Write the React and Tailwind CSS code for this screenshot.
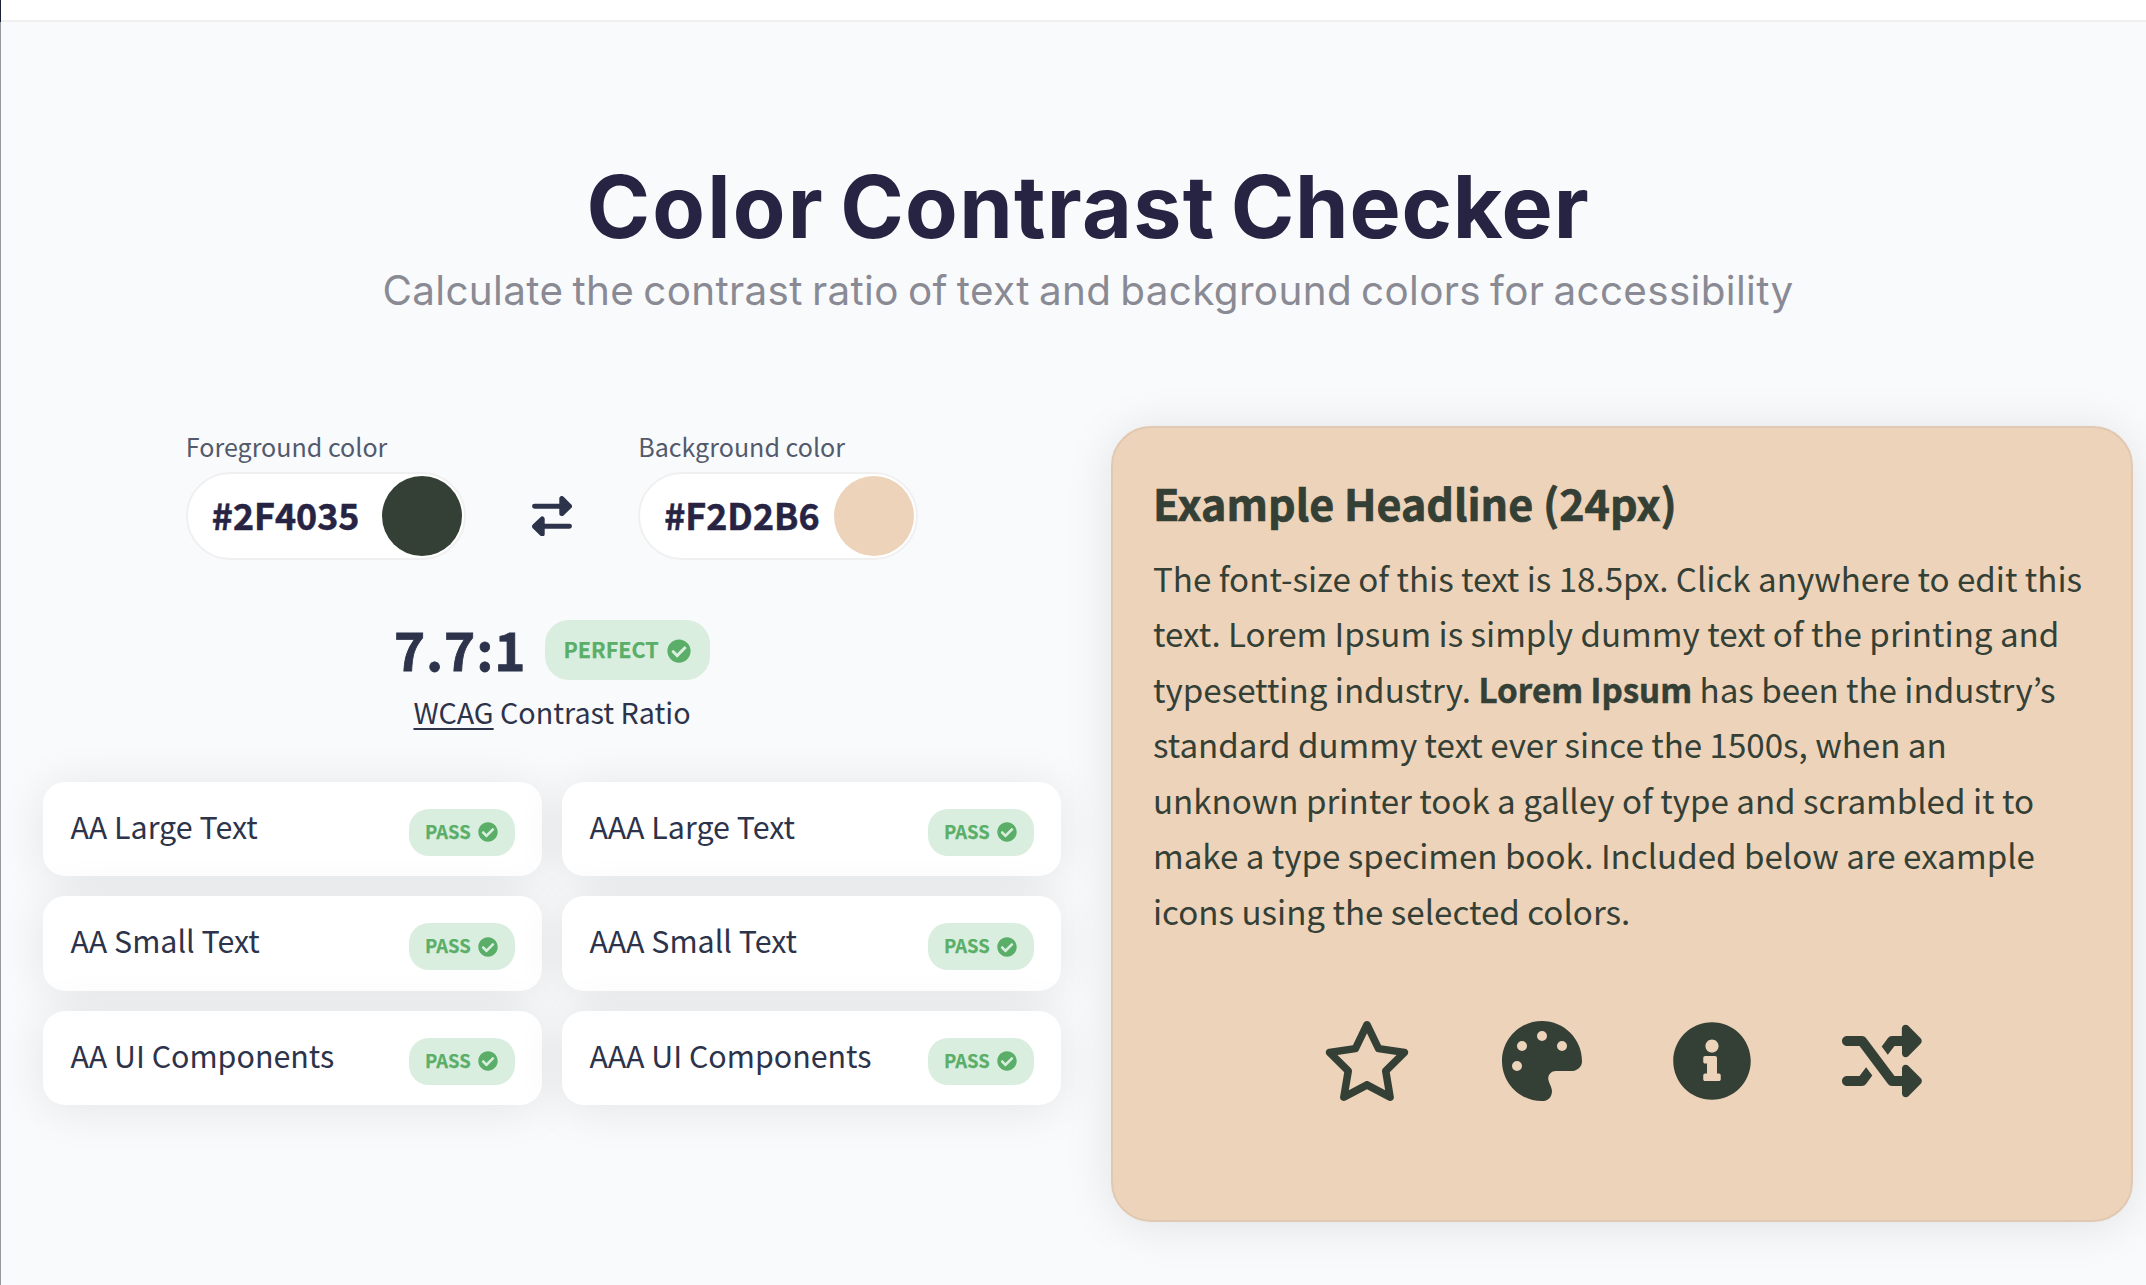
import React from "react";
import { FaCheckCircle, FaInfoCircle } from "react-icons/fa";
import { FaRegStar, FaPalette } from "react-icons/fa6";

const CARDS = [
  "AA Large Text",
  "AAA Large Text",
  "AA Small Text",
  "AAA Small Text",
  "AA UI Components",
  "AAA UI Components",
];

function SwapIcon() {
  return (
    <svg viewBox="0 0 40 40.6" className="h-[40.6px] w-10" fill="currentColor" stroke="currentColor" strokeLinecap="round" strokeLinejoin="round">
      <path d="M2.5 10.2H30M37.5 30.2H10" strokeWidth="4.9" fill="none" />
      <path d="M29.8 2.6V17.6L37.5 10.2ZM10.2 23V38L2.5 30.4Z" strokeWidth="5" />
    </svg>
  );
}

function ShuffleIcon() {
  return (
    <svg viewBox="0 0 512 512" className="size-20" fill="currentColor">
      <path d="M424.1 287c-15.13-15.12-40.1-4.426-40.1 16.97V352H336L153.6 108.8C147.6 100.8 138.1 96 128 96H32C14.31 96 0 110.3 0 128s14.31 32 32 32h80l182.4 243.2C300.4 411.3 309.9 416 320 416h63.97v47.94c0 21.39 25.86 32.12 40.99 17l79.1-79.98c9.387-9.387 9.387-24.59 0-33.97L424.1 287zM336 160h47.97v48.03c0 21.39 25.87 32.09 40.1 16.97l79.1-79.98c9.387-9.391 9.385-24.59-.0013-33.97l-79.1-79.98c-15.13-15.12-40.99-4.391-40.99 17V96H320c-10.06 0-19.56 4.75-25.59 12.81L254 162.7L293.1 216L336 160zM112 352H32c-17.69 0-32 14.31-32 32s14.31 32 32 32h96c10.06 0 19.56-4.75 25.59-12.81l40.4-53.87L154 296L112 352z" />
    </svg>
  );
}

function ColorField({ label, value, swatch }) {
  return (
    <div className="w-[280px]">
      <div className="text-[25.07px] leading-[40px] text-[#525a6c]">{label}</div>
      <div className="mt-1.5 flex h-[88px] items-center justify-between rounded-full border-2 border-[#f0f0f0] bg-white pr-0.5 pl-[24px]">
        <span className="pb-1 text-[35.8px] leading-[50px] font-bold text-[#272343] [-webkit-text-stroke:0.5px_currentColor]">{value}</span>
        <span className={`size-20 rounded-full ${swatch}`} />
      </div>
    </div>
  );
}

function PassCard({ title }) {
  return (
    <div className="flex h-[94.4px] items-center justify-between rounded-[22px] bg-white pr-[27px] pl-[27.5px] shadow-[0_4px_48px_rgba(0,0,0,0.09)]">
      <span className="pb-[6.4px] text-[30.4px] leading-[44px]">{title}</span>
      <span className="mt-[6.4px] flex h-[47px] w-[106px] items-center rounded-[20px] bg-[#d9eedf] pl-4 text-[#5aae68]">
        <span className="w-[53px] pb-[3px] text-[18.4px] leading-[28px] font-bold [-webkit-text-stroke:0.25px_currentColor]">PASS</span>
        <FaCheckCircle className="size-5" />
      </span>
    </div>
  );
}

export default function App() {
  return (
    <div className="flex h-[1285px] w-full overflow-hidden bg-[#f9fafc] font-['Noto_Sans_CJK_KR',sans-serif] text-[#2d334a]">
      <div className="flex w-px shrink-0 flex-col">
        <div className="h-[22px] bg-[#1b2236]" />
        <div className="flex-1 bg-[#97989b]" />
      </div>
      <div className="flex-1">
        <header className="h-[22px] border-b-2 border-[#f0f0f0] bg-white" />
        <main className="pt-[135px] pr-[13px] pl-[42px]">
          <h1 className="text-center font-['Inter',sans-serif] text-[86px] leading-[100px] font-bold tracking-[1.35px] text-[#272343] [word-spacing:-6.5px]">
            <span className="tracking-[2.2px]">Color</span> <span className="tracking-[1.3px]">Contrast</span>{" "}
            <span className="tracking-[0.8px]">Checker</span>
          </h1>
          <p className="mt-1.5 text-center font-['Inter',sans-serif] text-[40.4px] leading-[56px] tracking-[0.35px] text-[#8a8a94] [word-spacing:-2.6px]">
            Calculate the contrast ratio of text and background colors for accessibility
          </p>

          <div className="mt-[107px] flex items-start justify-between">
            <section className="w-[1018px]">
              <div className="flex items-end justify-center gap-[66.2px]">
                <ColorField label="Foreground color" value="#2F4035" swatch="bg-[#344035]" />
                <div className="flex h-[88px] items-center">
                  <SwapIcon />
                </div>
                <ColorField label="Background color" value="#F2D2B6" swatch="bg-[#ecd3ba]" />
              </div>

              <div className="mt-[60px] flex h-[60px] items-center justify-center">
                <span className="w-[151px] pb-[4px] text-[53px] leading-[56px] font-bold tracking-[0.8px] [-webkit-text-stroke:0.8px_currentColor]">7.7:1</span>
                <span className="flex h-[60px] w-[165px] items-center rounded-[24px] bg-[#d9eedf] pl-[18.5px] text-[#5aae68]">
                  <span className="w-[103.5px] pb-[3px] text-[21.5px] leading-[32px] font-bold [-webkit-text-stroke:0.25px_currentColor]">PERFECT</span>
                  <FaCheckCircle className="mt-px size-6" />
                </span>
              </div>
              <p className="mt-2.5 text-center text-[28.69px] leading-[44px]">
                <span className="underline decoration-2 underline-offset-[4px] [text-decoration-skip-ink:none]">WCAG</span> Contrast Ratio
              </p>

              <div className="mt-12 grid grid-cols-2 gap-5">
                {CARDS.map((title) => (
                  <PassCard key={title} title={title} />
                ))}
              </div>
            </section>

            <section className="h-[796px] w-[1022px] rounded-[40px] border-2 border-[#e1c8b1] bg-[#ecd3ba] px-10 pt-[42px] text-[#344035] shadow-[0_4px_48px_rgba(0,0,0,0.1)]">
              <h2 className="text-[43px] leading-[64px] font-bold [-webkit-text-stroke:0.7px_currentColor]">Example Headline (24px)</h2>
              <p className="mt-[16.6px] text-[33.14px] leading-[55.5px]">
                The font-size of this text is 18.5px. Click anywhere to edit this text. Lorem Ipsum is simply dummy text of
                the printing and typesetting industry. <b className="[-webkit-text-stroke:0.5px_currentColor]">Lorem Ipsum</b> has been the industry’s standard dummy text ever
                since the 1500s, when an unknown printer took a galley of type and scrambled it to make a type specimen
                book. Included below are example icons using the selected colors.
              </p>
              <div className="mt-[81.6px] flex items-center justify-center gap-[90px]">
                <FaRegStar className="h-20 w-[90px]" />
                <FaPalette className="size-20" />
                <FaInfoCircle className="size-20" />
                <ShuffleIcon />
              </div>
            </section>
          </div>
        </main>
      </div>
    </div>
  );
}
